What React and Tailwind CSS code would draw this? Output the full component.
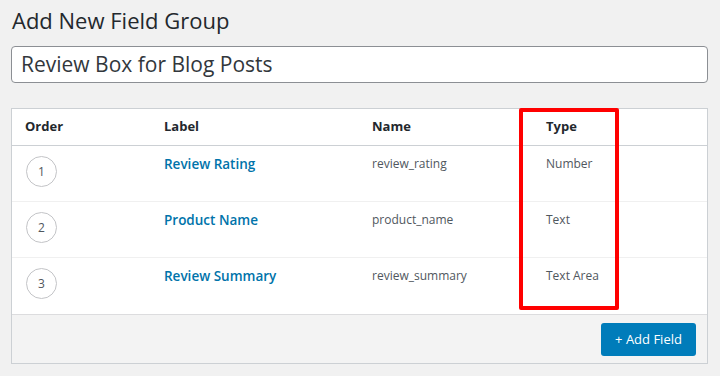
import React from "react";

const fields = [
  { order: 1, label: "Review Rating", name: "review_rating", type: "Number" },
  { order: 2, label: "Product Name", name: "product_name", type: "Text" },
  { order: 3, label: "Review Summary", name: "review_summary", type: "Text Area" },
];

const cols = "grid grid-cols-[139px_208px_174px_1fr] pl-[13px]";

export default function App() {
  return (
    <div
      className="w-[720px] h-[376px] bg-[#f1f1f1] overflow-hidden pl-[11px] pr-[12px] pt-[4px]"
      style={{ fontFamily: '"Open Sans", "Noto Sans", sans-serif' }}
    >
      <h1 className="text-[22px] leading-[32px] text-[#23282d] pl-[1px]">Add New Field Group</h1>

      <div className="mt-[10px] h-[37px] bg-white border border-[#8c8f94] rounded-[4px] flex items-center px-[9px]">
        <span className="text-[21px] text-[#32373c] leading-none">Review Box for Blog Posts</span>
      </div>

      <div className="relative mt-[25px] bg-white border border-[#ccd0d4]">
        <div className={`${cols} h-[37px] items-center border-b border-[#ccd0d4] text-[13px] font-bold text-[#23282d]`}>
          <div>Order</div>
          <div>Label</div>
          <div>Name</div>
          <div>Type</div>
        </div>

        {fields.map((f, i) => (
          <div
            key={f.order}
            className={`${cols} h-[56px] ${i < fields.length - 1 ? "border-b border-[#f0f0f0]" : ""}`}
          >
            <div className="pt-[10px] pl-[1px]">
              <div className="w-[31px] h-[31px] rounded-full border border-[#c3c4c7] flex items-center justify-center text-[12px] text-[#50575e]">
                {f.order}
              </div>
            </div>
            <div className="pt-[8px] text-[13.5px] font-semibold text-[#0073aa]">{f.label}</div>
            <div className="pt-[9px] text-[12px] text-[#50575e]">{f.name}</div>
            <div className="pt-[9px] text-[12px] text-[#50575e]">{f.type}</div>
          </div>
        ))}

        <div className="h-[49px] bg-[#f3f3f3] border-t border-[#dcdcde] flex justify-end items-start pt-[8px] pr-[11px]">
          <button className="h-[33px] w-[95px] rounded-[3px] bg-[#007cba] text-white text-[13px]">
            + Add Field
          </button>
        </div>

        <div className="absolute left-[507px] top-[-1px] w-[100px] h-[202px] border-[4px] border-[#ff0000] rounded-[2px] pointer-events-none" />
      </div>
    </div>
  );
}
